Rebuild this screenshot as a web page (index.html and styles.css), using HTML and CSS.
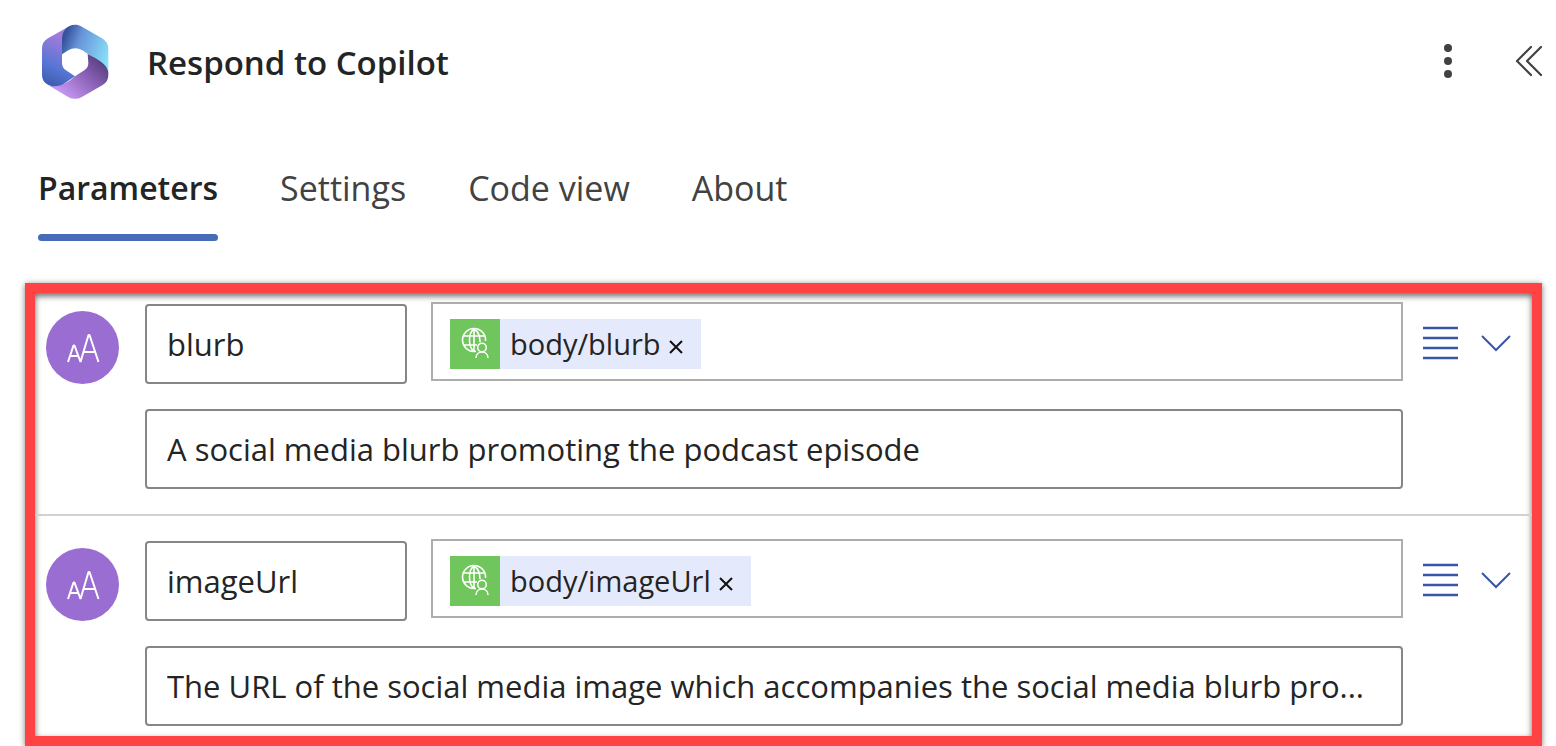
FILE: index.html
```html
<!DOCTYPE html>
<html lang="en">
<head>
<meta charset="utf-8">
<meta name="viewport" content="width=device-width, initial-scale=1">
<title>Respond to Copilot</title>
<link rel="stylesheet" href="styles.css">
</head>
<body>
<svg class="sprite" aria-hidden="true">
  <symbol id="text-type" viewBox="0 0 73 73">
    <path d="M22 51 27.500 34.500H28.500L34.500 51M24 45H32M34.500 51 42.500 24H43.500L52.500 51M37 41H50" fill="none" stroke="#fff" stroke-width="2" stroke-linejoin="bevel"/>
  </symbol>
  <symbol id="http" viewBox="0 0 50 50">
    <g fill="none" stroke="#fff" stroke-width="1.600">
      <path d="M26 32.300A11.500 11.500 0 1 1 35.500 22"/>
      <path d="M24 32.500C18 28 18 14 24 10C29 13 30 18 30 23M24 10V32M14 17H34M14 26H27"/>
      <circle cx="32" cy="28.500" r="4.300"/>
      <path d="M26 39C26 31 38 31 38 39"/>
    </g>
  </symbol>
  <symbol id="lines" viewBox="0 0 35 34">
    <path d="M0 2H35M0 12H35M0 22H35M0 32H35" stroke="#3955a8" stroke-width="2.600"/>
  </symbol>
  <symbol id="chevron" viewBox="0 0 30 18">
    <path d="M1 2 15 16 29 2" fill="none" stroke="#3955a8" stroke-width="2"/>
  </symbol>
</svg>
<header class="header">
  <svg class="logo" viewBox="60 36 210 228" role="img" aria-label="Copilot">
    <defs>
      <linearGradient id="left" x1="0.700" y1="0" x2="0.450" y2="1"><stop offset="0" stop-color="#ae7edb"/><stop offset="0.200" stop-color="#a07bda"/><stop offset="0.700" stop-color="#5876d5"/><stop offset="1" stop-color="#3f5fb5"/></linearGradient>
      <linearGradient id="top" x1="0" y1="0.400" x2="1" y2="0.800"><stop offset="0" stop-color="#37539d"/><stop offset="0.300" stop-color="#6795da"/><stop offset="1" stop-color="#8be4fa"/></linearGradient>
      <linearGradient id="bottom" x1="1" y1="0.200" x2="0.200" y2="0.850"><stop offset="0" stop-color="#533b79"/><stop offset="0.450" stop-color="#8960b5"/><stop offset="1" stop-color="#c596f2"/></linearGradient>
    </defs>
    <path fill="url(#bottom)" d="M203 129C238 143 264 156 265 184V193Q265 212 248 222L187 257Q165 270 143 257L88 224Q135 228 165 196L193 178Q205 170 205 156Z"/>
    <path fill="url(#left)" d="M148 46L84 82Q66 92 66 114V191Q66 212 84 221C100 230 120 226 134 217L165 196L138 178Q126 170 126 155V80Q128 57 148 46Z"/>
    <path fill="url(#top)" d="M126 130V80C126 53 157 30 187 48L246 82Q265 93 265 114V184C261 158 233 146 205 130L187 118Q165 106 145 118Z"/>
  </svg>
  <h1 class="title">Respond to Copilot</h1>
  <div class="header-actions">
    <button class="icon-button" aria-label="More commands">
      <svg width="8" height="34" viewBox="0 0 8 34" fill="#424242"><circle cx="4" cy="4" r="4"/><circle cx="4" cy="17" r="4"/><circle cx="4" cy="30" r="4"/></svg>
    </button>
    <button class="icon-button" aria-label="Collapse">
      <svg width="28" height="32" viewBox="0 0 28 32" fill="none" stroke="#424242" stroke-width="2.200" stroke-linecap="round" stroke-linejoin="round"><path d="M16 2 2 16 16 30M26 2 12 16 26 30"/></svg>
    </button>
  </div>
</header>
<nav class="tabs" role="tablist">
  <button class="tab tab-active" role="tab" aria-selected="true">Parameters</button>
  <button class="tab" role="tab" aria-selected="false">Settings</button>
  <button class="tab" role="tab" aria-selected="false">Code view</button>
  <button class="tab" role="tab" aria-selected="false">About</button>
</nav>
<main class="frame">
  <section class="param">
    <svg class="avatar" aria-hidden="true"><use href="#text-type"/></svg>
    <input class="field name" aria-label="Output name" value="blurb">
    <div class="value">
      <span class="token"><svg class="token-icon" aria-hidden="true"><use href="#http"/></svg><span class="token-text">body/blurb</span><button class="remove" aria-label="Remove body/blurb"><svg width="14" height="14" viewBox="0 0 14 14"><path d="M1 1 13 13M13 1 1 13" stroke="#111" stroke-width="2"/></svg></button></span>
    </div>
    <div class="row-actions">
      <button class="icon-button" aria-label="Options"><svg width="35" height="34"><use href="#lines"/></svg></button>
      <button class="icon-button" aria-label="Expand"><svg width="30" height="18"><use href="#chevron"/></svg></button>
    </div>
    <input class="field description" aria-label="Output description" value="A social media blurb promoting the podcast episode">
  </section>
  <section class="param">
    <svg class="avatar" aria-hidden="true"><use href="#text-type"/></svg>
    <input class="field name" aria-label="Output name" value="imageUrl">
    <div class="value">
      <span class="token"><svg class="token-icon" aria-hidden="true"><use href="#http"/></svg><span class="token-text">body/imageUrl</span><button class="remove" aria-label="Remove body/imageUrl"><svg width="14" height="14" viewBox="0 0 14 14"><path d="M1 1 13 13M13 1 1 13" stroke="#111" stroke-width="2"/></svg></button></span>
    </div>
    <div class="row-actions">
      <button class="icon-button" aria-label="Options"><svg width="35" height="34"><use href="#lines"/></svg></button>
      <button class="icon-button" aria-label="Expand"><svg width="30" height="18"><use href="#chevron"/></svg></button>
    </div>
    <input class="field description" aria-label="Output description" value="The URL of the social media image which accompanies the social media blurb pro...">
  </section>
</main>
</body>
</html>
```
FILE: styles.css
```css
* { box-sizing: border-box; }
body {
  margin: 0;
  background: #fff;
  color: #242424;
  font-family: "Open Sans", "Noto Sans", sans-serif;
  font-size: 31px;
}
button, input { font: inherit; color: inherit; }
button { padding: 0; border: 0; background: none; cursor: pointer; }
svg { display: block; flex: none; }
.sprite { position: absolute; width: 0; height: 0; }

.header {
  display: flex;
  align-items: center;
  padding: 23px 13px 0 40px;
}
.logo { width: 70px; height: 76px; }
.title {
  flex: 1;
  margin: 0 0 0 37px;
  padding-top: 4px;
  font-size: 33px;
  font-weight: 600;
  line-height: 48px;
}
.header-actions { display: flex; align-items: center; gap: 63px; }

.tabs {
  display: flex;
  gap: 62px;
  padding: 65px 38px 0;
}
.tab {
  height: 77px;
  padding-bottom: 29px;
  font-size: 34px;
  line-height: 48px;
  color: #424242;
}
.tab-active {
  position: relative;
  font-size: 32px;
  font-weight: 600;
  color: #242424;
}
.tab-active::after {
  content: "";
  position: absolute;
  right: 0;
  bottom: 0;
  left: 0;
  height: 7px;
  border-radius: 4px;
  background: #466bb9;
}

.frame {
  margin: 42px 14px 0 25px;
  border: 10px solid #ff4343;
  box-shadow: 0 1px 6px rgba(0, 0, 0, 0.5), inset 0 3px 6px rgba(0, 0, 0, 0.6);
}
.param {
  display: grid;
  grid-template-columns: 75px 262px 1fr 84px;
  column-gap: 24px;
  row-gap: 25px;
  padding: 9px 21px 25px 11px;
}
.param + .param {
  padding-top: 23px;
  padding-bottom: 10px;
  border-top: 2px solid #d1d1d1;
}
.avatar {
  width: 73px;
  height: 73px;
  margin-top: 9px;
  border-radius: 50%;
  background: #9a6dd2;
}
.field {
  width: 100%;
  min-width: 0;
  height: 80px;
  padding: 0 20px;
  border: 2px solid #868686;
  border-radius: 4px;
  background: #fff;
  text-overflow: ellipsis;
}
.name { margin-top: 2px; }
.description { grid-column: 2 / 4; }
.value {
  display: flex;
  align-items: center;
  height: 79px;
  padding: 4px 17px 0;
  border: 2px solid #adadad;
}
.token {
  display: flex;
  align-items: center;
  height: 50px;
  padding-right: 18px;
  background: #e4eafb;
  font-size: 29px;
}
.token-icon { width: 50px; height: 50px; background: #70c55c; }
.token-text { margin: 0 8px 0 10px; }
.remove { margin-top: 6px; }
.row-actions {
  display: flex;
  align-items: center;
  justify-content: space-between;
  height: 81px;
  margin-left: -4px;
}
```
